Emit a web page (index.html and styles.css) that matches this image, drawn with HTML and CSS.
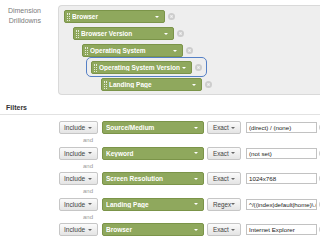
FILE: index.html
```html
<!DOCTYPE html>
<html lang="en">
<head>
    <meta charset="UTF-8">
    <meta name="viewport" content="width=device-width, initial-scale=1.0">
    <title>Drilldowns and Filters</title>
    <link rel="stylesheet" href="styles.css">
</head>
<body>
    <!-- Dimension drilldowns -->
    <div class="drill">
        <div class="drill-label">Dimension<br>Drilldowns</div>
        <div class="drill-panel">
            <div class="dim-row l1">
                <div class="chip"><span class="grip"></span><span class="chip-name">Browser</span><span class="caret"></span></div>
                <span class="remove"></span>
            </div>
            <div class="dim-row l2">
                <div class="chip"><span class="grip"></span><span class="chip-name">Browser Version</span><span class="caret"></span></div>
                <span class="remove"></span>
            </div>
            <div class="dim-row l3">
                <div class="chip"><span class="grip"></span><span class="chip-name">Operating System</span><span class="caret"></span></div>
                <span class="remove"></span>
            </div>
            <div class="dim-row l4 drag-target">
                <div class="chip"><span class="grip"></span><span class="chip-name">Operating System Version</span><span class="caret"></span></div>
                <span class="remove"></span>
            </div>
            <div class="dim-row l5">
                <div class="chip"><span class="grip"></span><span class="chip-name">Landing Page</span><span class="caret"></span></div>
                <span class="remove"></span>
            </div>
        </div>
    </div>

    <!-- Filters -->
    <div class="filters-title">Filters</div>
    <div class="filters">
        <div class="filter-row">
            <div class="btn include">Include <span class="caret dark"></span></div>
            <div class="chip filter-chip"><span class="chip-name">Source/Medium</span><span class="caret"></span></div>
            <div class="btn match">Exact <span class="caret dark"></span></div>
            <div class="value">(direct) / (none)</div>
            <span class="remove"></span>
        </div>
        <div class="and">and</div>
        <div class="filter-row">
            <div class="btn include">Include <span class="caret dark"></span></div>
            <div class="chip filter-chip"><span class="chip-name">Keyword</span><span class="caret"></span></div>
            <div class="btn match">Exact <span class="caret dark"></span></div>
            <div class="value">(not set)</div>
            <span class="remove"></span>
        </div>
        <div class="and">and</div>
        <div class="filter-row">
            <div class="btn include">Include <span class="caret dark"></span></div>
            <div class="chip filter-chip"><span class="chip-name">Screen Resolution</span><span class="caret"></span></div>
            <div class="btn match">Exact <span class="caret dark"></span></div>
            <div class="value">1024x768</div>
            <span class="remove"></span>
        </div>
        <div class="and">and</div>
        <div class="filter-row">
            <div class="btn include">Include <span class="caret dark"></span></div>
            <div class="chip filter-chip"><span class="chip-name">Landing Page</span><span class="caret"></span></div>
            <div class="btn match">Regex <span class="caret dark"></span></div>
            <div class="value">^/((index|default|home)\.(htm|html|php|asp))?$</div>
            <span class="remove"></span>
        </div>
        <div class="and">and</div>
        <div class="filter-row">
            <div class="btn include">Include <span class="caret dark"></span></div>
            <div class="chip filter-chip"><span class="chip-name">Browser</span><span class="caret"></span></div>
            <div class="btn match">Exact <span class="caret dark"></span></div>
            <div class="value">Internet Explorer</div>
            <span class="remove"></span>
        </div>
    </div>
</body>
</html>
```

FILE: styles.css
```css
body {
    font-family: "Liberation Sans", Arial, sans-serif;
    margin: 0;
    padding: 0;
    background-color: #ffffff;
    overflow: hidden;
}

.drill {
    display: flex;
    padding-top: 5px;
}

.drill-label {
    width: 41px;
    padding-right: 17px;
    text-align: right;
    font-size: 7px;
    line-height: 10px;
    color: #7a7a7a;
    padding-top: 1px;
}

.drill-panel {
    flex: 1;
    display: flex;
    flex-direction: column;
    gap: 4px;
    padding: 4px 0 3px 5px;
    background-color: #eeeeee;
    border: 1px solid #d9d9d9;
    border-right: none;
    border-radius: 4px 0 0 4px;
}

.dim-row {
    display: flex;
    align-items: center;
    gap: 3px;
    align-self: flex-start;
    position: relative;
}

.dim-row.l2 { margin-left: 9px; }
.dim-row.l3 { margin-left: 18px; }
.dim-row.l4 { margin-left: 27px; }
.dim-row.l5 { margin-left: 37px; }

/* blue outline of the drop target */
.drag-target::after {
    content: "";
    position: absolute;
    left: -5px;
    right: -5px;
    top: -4px;
    bottom: -3px;
    border: 1.5px solid #5580c6;
    border-radius: 5px;
}

.chip {
    box-sizing: border-box;
    flex-shrink: 0;
    width: 101px;
    height: 13px;
    display: flex;
    align-items: center;
    gap: 2px;
    padding: 0 5px 0 2px;
    background-color: #8fa85d;
    border: 1px solid #7b9449;
    border-radius: 2px;
    color: #ffffff;
    font-size: 6.5px;
    font-weight: bold;
}

.chip-name {
    flex: 1;
    white-space: nowrap;
    overflow: hidden;
}

.grip {
    width: 1px;
    height: 8px;
    border-left: 1px dotted rgba(255, 255, 255, 0.75);
    border-right: 1px dotted rgba(255, 255, 255, 0.75);
}

.caret {
    width: 0;
    height: 0;
    border-left: 2px solid transparent;
    border-right: 2px solid transparent;
    border-top: 2px solid #ffffff;
}

.caret.dark {
    border-top-color: #666666;
}

.remove {
    width: 7px;
    height: 7px;
    border-radius: 50%;
    background-color: #cdcdcd;
    position: relative;
    flex-shrink: 0;
}

.remove::before,
.remove::after {
    content: "";
    position: absolute;
    left: 2px;
    top: 3px;
    width: 3px;
    height: 1px;
    background-color: #f4f4f4;
    transform: rotate(45deg);
}

.remove::after {
    transform: rotate(-45deg);
}

.filters-title {
    padding: 8px 6px 1px;
    font-size: 7px;
    line-height: 10px;
    font-weight: bold;
    color: #333333;
    border-bottom: 1px solid #e2e2e2;
}

.filters {
    padding-top: 6px;
}

.filter-row {
    display: flex;
    align-items: center;
    height: 13px;
    padding-left: 59px;
}

.btn {
    box-sizing: border-box;
    flex-shrink: 0;
    height: 13px;
    display: flex;
    align-items: center;
    justify-content: space-between;
    padding: 0 5px 0 4px;
    background: linear-gradient(#fbfbfb, #e4e4e4);
    border: 1px solid #c6c6c6;
    border-radius: 2px;
    color: #444444;
    font-size: 6.6px;
}

.btn.include {
    width: 39px;
}

.btn.match {
    width: 34px;
    margin-left: 3px;
    padding: 0 5px;
    font-size: 6.3px;
}

.filter-chip {
    width: 102px;
    margin-left: 4px;
    padding-left: 3px;
}

.value {
    box-sizing: border-box;
    flex-shrink: 0;
    width: 71px;
    height: 11px;
    margin-left: 5px;
    padding: 0 2px;
    background-color: #ffffff;
    border: 1px solid #c2c2c2;
    font-size: 6.2px;
    line-height: 9px;
    color: #222222;
    white-space: nowrap;
    overflow: hidden;
}

.filter-row .remove {
    margin-left: 2px;
}

.and {
    padding-left: 83px;
    font-size: 6px;
    line-height: 12.5px;
    color: #999999;
}
```
